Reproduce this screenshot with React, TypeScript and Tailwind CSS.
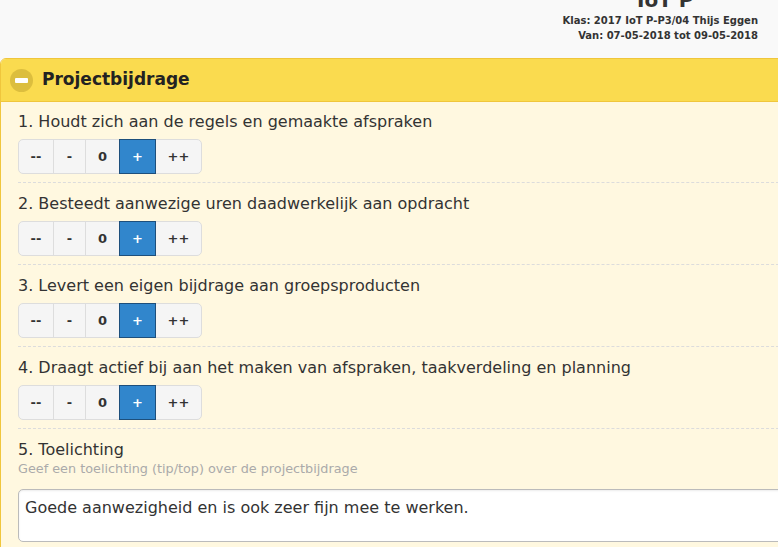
import { useState } from "react";

const questions = [
  "1. Houdt zich aan de regels en gemaakte afspraken",
  "2. Besteedt aanwezige uren daadwerkelijk aan opdracht",
  "3. Levert een eigen bijdrage aan groepsproducten",
  "4. Draagt actief bij aan het maken van afspraken, taakverdeling en planning",
];

const options = [
  { label: "--", w: "w-[36px]" },
  { label: "-", w: "w-[33px]" },
  { label: "0", w: "w-[35px]" },
  { label: "+", w: "w-[37px]" },
  { label: "++", w: "w-[47px]" },
];

function Rating({ value, onChange }: { value: string; onChange: (v: string) => void }) {
  return (
    <div className="flex h-[35px] w-fit mt-[5px]">
      {options.map((o, i) => {
        const active = o.label === value;
        return (
          <button
            key={o.label}
            onClick={() => onChange(o.label)}
            className={`${o.w} h-full flex items-center justify-center text-[13px] font-bold border ${
              active
                ? "bg-[#3186cc] text-white border-[#1d4f7c] z-10"
                : "bg-[#f5f5f5] text-[#333] border-[#dddddd]"
            } ${i > 0 ? "-ml-px" : ""} ${i === 0 ? "rounded-l-[5px]" : ""} ${
              i === options.length - 1 ? "rounded-r-[5px]" : ""
            }`}
          >
            {o.label}
          </button>
        );
      })}
    </div>
  );
}

export default function App() {
  const [answers, setAnswers] = useState<string[]>(["+", "+", "+", "+"]);

  return (
    <div
      className="w-[778px] h-[547px] overflow-hidden bg-[#f9f9f9] text-[#333]"
      style={{ fontFamily: '"DejaVu Sans", sans-serif' }}
    >
      {/* header info */}
      <div className="h-[70px] -mt-[12px] flex justify-end pr-[20px]">
        <div className="flex flex-col items-end">
          <h1 className="self-center pl-[10px] text-[20px] font-bold leading-[24px] text-[#333]">IoT P</h1>
          <p className="text-[10px] font-bold leading-[15px] mt-[1px]">Klas: 2017 IoT P-P3/04 Thijs Eggen</p>
          <p className="text-[10px] font-bold leading-[15px]">Van: 07-05-2018 tot 09-05-2018</p>
        </div>
      </div>

      {/* panel */}
      <section className="w-[800px] h-[520px] border border-[#f0c63c] rounded-tl-[6px] bg-[#fff8e0]">
        <div className="h-[43px] bg-[#fadb4f] border-b border-[#f0c63c] rounded-tl-[5px] flex items-center pl-[9px] gap-[9px]">
          <span className="w-[23px] h-[23px] rounded-full bg-[#dcbe3e] flex items-center justify-center">
            <span className="w-[13px] h-[5px] bg-white rounded-[1px]" />
          </span>
          <h2 className="text-[17px] font-bold text-[#222]">Projectbijdrage</h2>
        </div>

        <div className="pl-[17px] pt-[8px]">
          {questions.map((q, i) => (
            <div key={q} className="pb-[8px] mb-[9px] border-b border-dashed border-[#dcdcdc]">
              <p className="text-[16px] leading-[24px]">{q}</p>
              <Rating
                value={answers[i]}
                onChange={(v) => setAnswers(answers.map((a, j) => (j === i ? v : a)))}
              />
            </div>
          ))}

          <p className="text-[16px] leading-[24px]">5. Toelichting</p>
          <p className="text-[12.8px] leading-[14px] text-[#aaaaaa]">Geef een toelichting (tip/top) over de projectbijdrage</p>
          <textarea
            defaultValue="Goede aanwezigheid en is ook zeer fijn mee te werken."
            className="block mt-[13px] w-[780px] h-[53px] bg-white border border-[#bbbbbb] rounded-[5px] px-[6px] pt-[7px] text-[16px] leading-[22px] text-[#333] resize-none outline-none shadow-[inset_0_1px_2px_rgba(0,0,0,0.08)]"
            style={{ fontFamily: '"DejaVu Sans", sans-serif' }}
          />
        </div>
      </section>
    </div>
  );
}
